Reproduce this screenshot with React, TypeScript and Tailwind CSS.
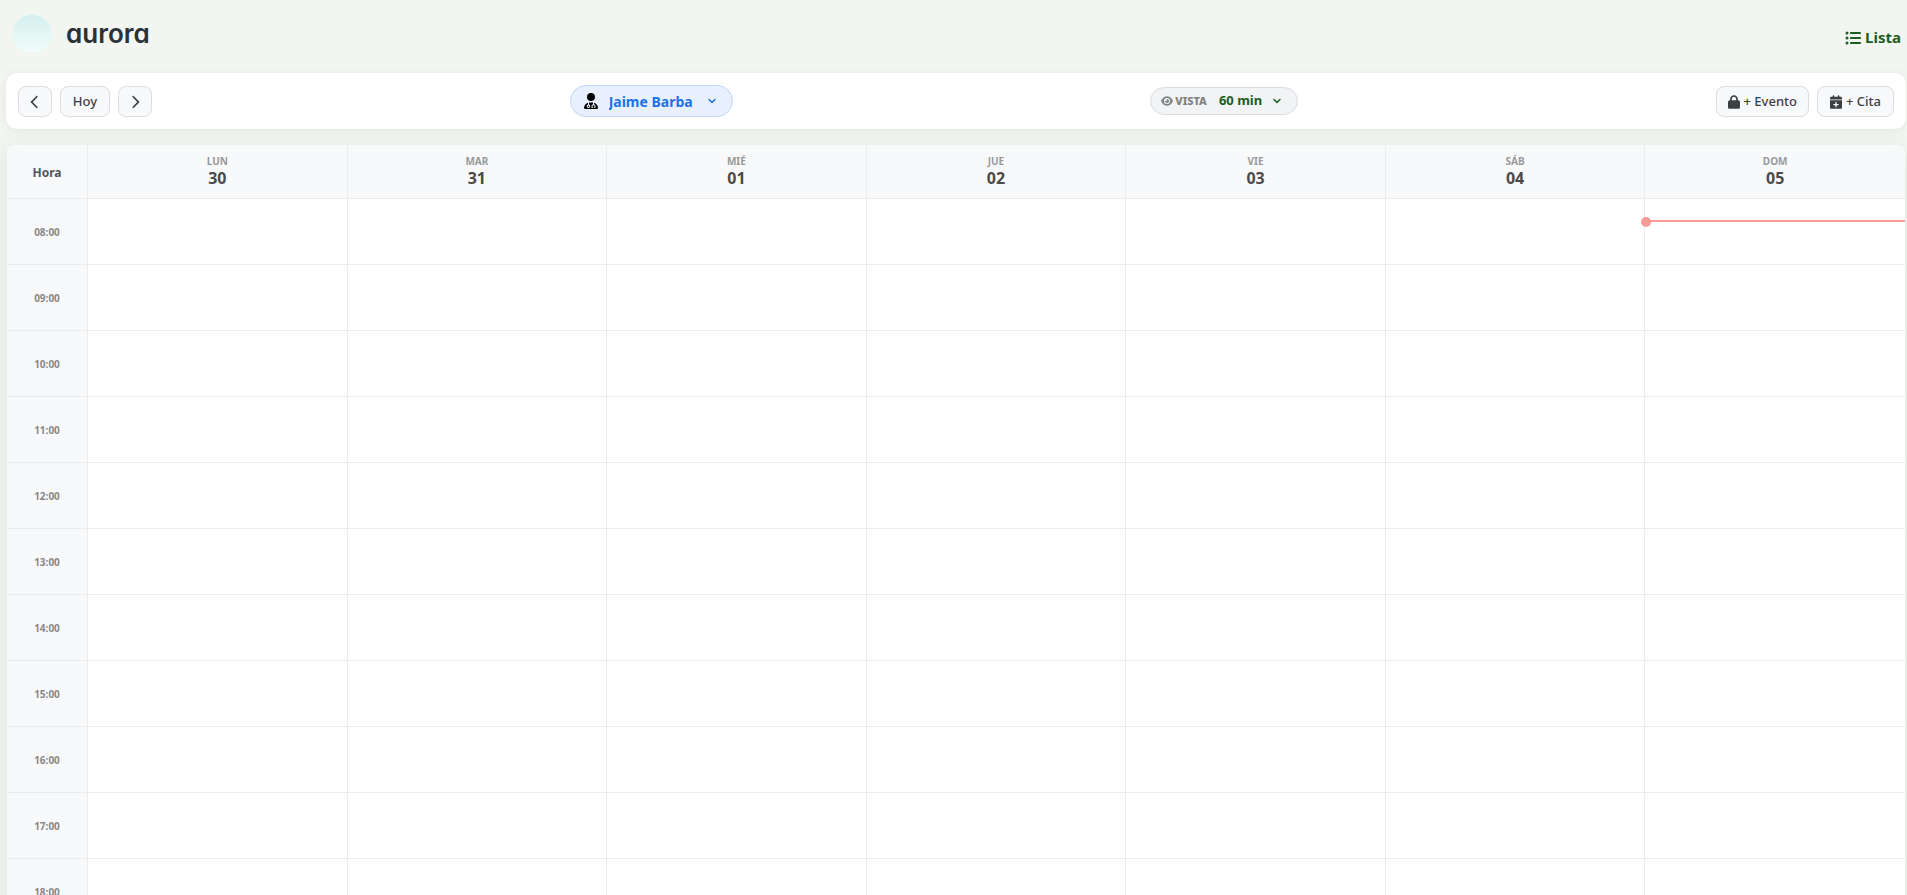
import { ReactNode } from 'react'
import {
  FaCalendarPlus,
  FaChevronLeft,
  FaChevronRight,
  FaEye,
  FaListUl,
  FaLock,
  FaUserDoctor
} from 'react-icons/fa6'
import { ChevronDown } from 'lucide-react'

const days = [
  { name: 'LUN', number: '30' },
  { name: 'MAR', number: '31' },
  { name: 'MIÉ', number: '01' },
  { name: 'JUE', number: '02' },
  { name: 'VIE', number: '03' },
  { name: 'SÁB', number: '04' },
  { name: 'DOM', number: '05' }
]

const hours = [
  '08:00',
  '09:00',
  '10:00',
  '11:00',
  '12:00',
  '13:00',
  '14:00',
  '15:00',
  '16:00',
  '17:00',
  '18:00'
]

interface ToolbarButtonProps {
  label?: string // Accessible name for icon-only buttons
  className: string
  children: ReactNode
}

// Small outlined button used on both ends of the toolbar
const ToolbarButton = ({ label, className, children }: ToolbarButtonProps) => (
  <button
    type="button"
    aria-label={label}
    className={`flex h-[31px] items-center justify-center gap-1 rounded-lg border border-[#dadce0] bg-[#f8f9fb] text-[13px] font-medium text-[#3c4043] hover:bg-gray-100 ${className}`}
  >
    {children}
  </button>
)

// Brand and link to the list view
const Header = () => (
  <header className="flex h-[73px] items-center justify-between pr-[6px] pl-3">
    <div className="flex items-center gap-[14px] pb-[6px]">
      <span className="size-10 rounded-full border border-[#e6f8f8] bg-linear-to-b from-[#d3f0ec] to-[#f4fcfb]" />
      <span className="font-[Inter,sans-serif] text-[26px] leading-8 font-semibold text-[#2b3138] [font-feature-settings:'cv11']">
        aurora
      </span>
    </div>
    <a
      href="#lista"
      className="flex items-center gap-1 pt-[2px] text-[15px] font-bold text-[#1b5e20]"
    >
      <FaListUl className="size-4" />
      Lista
    </a>
  </header>
)

const Toolbar = () => (
  <div className="ml-[6px] mr-px flex h-14 items-center justify-between rounded-xl bg-white px-3 shadow-[0_2px_12px_rgba(0,0,0,0.06)]">
    <div className="flex gap-2 pt-px">
      <ToolbarButton label="Semana anterior" className="w-[34px]">
        <FaChevronLeft className="size-[14px]" />
      </ToolbarButton>
      <ToolbarButton className="w-[50px]">Hoy</ToolbarButton>
      <ToolbarButton label="Semana siguiente" className="w-[34px]">
        <FaChevronRight className="size-[14px]" />
      </ToolbarButton>
    </div>

    <label className="flex h-8 items-center rounded-full border border-[#c2d7fb] bg-[#e8f0fe] pr-[14px] pl-3 text-[14px] font-bold text-[#1a73e8]">
      <FaUserDoctor className="mr-[10px] size-4 text-black" />
      <select
        aria-label="Profesional"
        className="appearance-none bg-transparent outline-none"
      >
        <option>Jaime Barba</option>
      </select>
      <ChevronDown className="ml-3 size-3" strokeWidth={3} />
    </label>

    <label className="flex h-7 items-center rounded-full border border-[#dadce0] bg-[#f1f3f4] px-[10px] text-[#1b5e20]">
      <FaEye className="size-3 text-[#80868b]" />
      <span className="mr-3 ml-[2px] text-[11px] font-extrabold text-[#808080]">
        VISTA
      </span>
      <select className="appearance-none bg-transparent text-[13px] font-bold outline-none">
        <option>60 min</option>
      </select>
      <ChevronDown className="mx-2 mr-1 size-3" strokeWidth={3} />
    </label>

    <div className="flex gap-2 pt-px">
      <ToolbarButton className="px-[11px]">
        <FaLock className="h-[14px] w-3" />
        + Evento
      </ToolbarButton>
      <ToolbarButton className="px-3">
        <FaCalendarPlus className="h-[14px] w-3" />
        + Cita
      </ToolbarButton>
    </div>
  </div>
)

// Line across today's column at the current time
const NowLine = () => (
  <div className="absolute inset-x-0 top-[21px] h-[2px] bg-[#f99c97]">
    <span className="absolute -top-[3px] -left-1 size-[10px] rounded-full bg-[#f99c97]" />
  </div>
)

const Calendar = () => (
  <div className="mt-4 mr-[2px] ml-[7px] overflow-hidden rounded-t-lg bg-white shadow-[0_4px_20px_rgba(0,0,0,0.08)]">
    <table className="w-full table-fixed border-separate border-spacing-0">
      <thead>
        <tr className="h-[54px] bg-[#f8f9fb]">
          <th className="w-[81px] border-r border-b border-[#ececec] pt-[2px] text-[12px] font-bold text-[#555]">
            Hora
          </th>
          {days.map((day) => (
            <th
              key={day.name}
              className="border-r border-b border-[#ececec] px-0 pt-0 pb-1 last:border-r-0"
            >
              <div className="text-[10px] leading-4 font-bold text-[#999]">
                {day.name}
              </div>
              <div className="text-[16px] leading-[18px] font-bold text-[#4a4a4a]">
                {day.number}
              </div>
            </th>
          ))}
        </tr>
      </thead>
      <tbody>
        {hours.map((hour, row) => (
          <tr key={hour} className="h-[66px]">
            <th className="border-r border-b border-[#ececec] bg-[#f8f9fb] pt-[2px] text-[10px] font-bold text-[#888]">
              {hour}
            </th>
            {days.map((day, col) => (
              <td
                key={day.name}
                className="relative border-r border-b border-[#ececec] p-0 last:border-r-0"
              >
                {row === 0 && col === days.length - 1 && <NowLine />}
              </td>
            ))}
          </tr>
        ))}
      </tbody>
    </table>
  </div>
)

const App = () => (
  <div className="h-screen overflow-hidden bg-[#f3f6f0] font-['Noto_Sans',sans-serif]">
    <Header />
    <Toolbar />
    <Calendar />
  </div>
)

export default App
